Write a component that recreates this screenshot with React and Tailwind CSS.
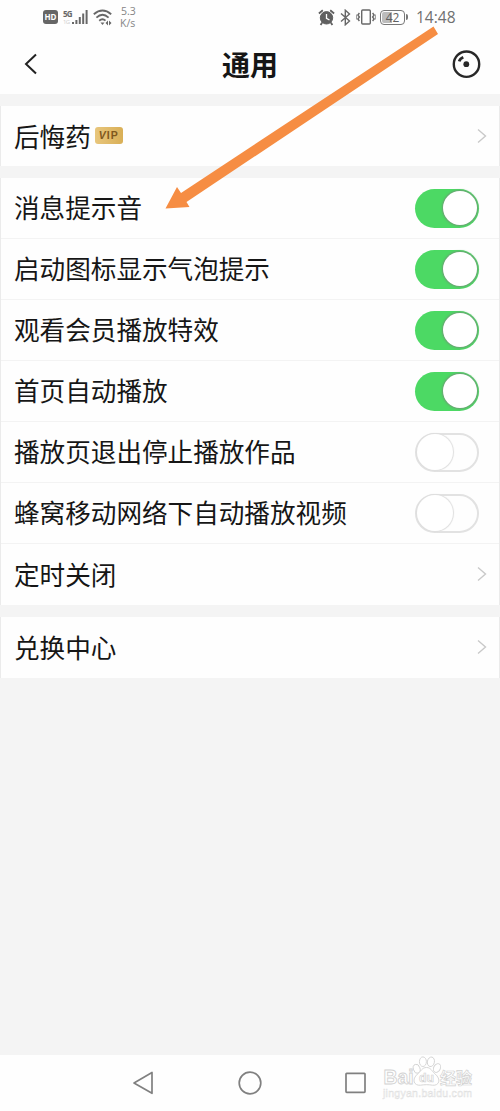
import React, { useState } from "react";

const switchRows = [
    { id: "sound", label: "消息提示音", on: true },
    { id: "bubble", label: "启动图标显示气泡提示", on: true },
    { id: "effect", label: "观看会员播放特效", on: true },
    { id: "home", label: "首页自动播放", on: true },
    { id: "exit", label: "播放页退出停止播放作品", on: false },
    { id: "cellular", label: "蜂窝移动网络下自动播放视频", on: false },
];

const Chevron = () => (
    <svg className="w-[10px] h-[16px] mr-[12px] -mt-px" viewBox="0 0 10 16" fill="none" stroke="#c9c9c9" strokeWidth="1.4">
        <path d="M1 1.5L8.5 8L1 14.5" />
    </svg>
);

const Toggle = ({ on, onClick, label }) => (
    <button
        role="switch"
        aria-checked={on}
        aria-label={label}
        onClick={onClick}
        className={`w-16 h-[39px] mr-[20px] rounded-full flex items-center ${on ? "bg-[#4cd964] justify-end pr-[2px]" : "bg-[#fefefe] border-2 border-[#e2e2e2]"}`}
    >
        <span
            className={`rounded-full bg-white ${on ? "w-[34px] h-[34px] shadow-[0_0_2px_1px_#6c9f74]" : "w-[36px] h-[36px] shadow-[0_0_1px_1px_#dedede]"}`}
        ></span>
    </button>
);

const Row = ({ label, badge, children }) => (
    <div className="h-[61px] pl-[13px] flex items-center justify-between">
        <div className="flex items-center">
            <span className="pt-[2px] text-[25.6px] leading-[36px] whitespace-nowrap">{label}</span>
            {badge}
        </div>
        {children}
    </div>
);

const StatusBar = () => (
    <div className="h-[34px] px-[43px] flex items-center justify-between text-[#686868]">
        <div className="flex items-center">
            <span className="w-[15px] h-[14px] rounded-[3px] bg-[#666] text-white text-[8px] font-bold leading-[14px] text-center">HD</span>
            <div className="w-[9px] ml-[5px] h-[17px] text-[8px] leading-[9px] font-bold tracking-[-0.8px]">
                5G
                <div className="text-[6px] leading-[8px] font-normal text-[#cfcfcf]">1G</div>
            </div>
            <svg className="w-4 h-[16px]" viewBox="0 0 16 16" fill="#686868">
                <path d="M0 13h2v2H0zM3.4 11h2v4h-2zM6.8 8h2v7h-2zM10.2 4.5h2V15h-2zM13.6 1h2v14h-2z" />
            </svg>
            <svg className="w-5 h-[17px] ml-[5px]" viewBox="0 0 20 17" fill="none" stroke="#686868" strokeWidth="1.8">
                <path d="M.8 5.2Q9.5-2.2 18.2 5.2M3.4 8.6Q9.5 3 15.6 8.6M6.2 11.7Q9.5 8.8 12.5 11.7" />
                <path d="M7.5 13.5h4L9.5 16z" fill="#686868" stroke="none" />
                <path d="M15 11.5L12.5 14l2.5 2.5zM16 11.5l2.5 2.5-2.5 2.5z" fill="#686868" stroke="none" />
            </svg>
            <div className="ml-[7px] text-[10.5px] leading-[12px] text-[#858585]">
                <div className="pl-px">5.3</div>
                <div>K/s</div>
            </div>
        </div>
        <div className="flex items-center">
            <svg className="w-[17px] h-[17px] mr-[5px]" viewBox="0 0 17 17" fill="none" stroke="#606060">
                <circle cx="8.5" cy="8.8" r="6.2" fill="#606060" />
                <path d="M.9 4.5L4.8 1.2M16.1 4.5l-3.9-3.3M4.2 13.5L2.6 16M12.8 13.5l1.6 2.5" strokeWidth="1.8" />
                <path d="M8.5 5v4.3l3 1.7" stroke="#fff" strokeWidth="1.3" />
            </svg>
            <svg className="w-[11px] h-[17px] mr-[5px]" viewBox="0 0 11 17" fill="none" stroke="#686868" strokeWidth="1.4">
                <path d="M1 4.5l8.5 7.6-4.2 3.7V1.2l4.2 3.7L1 12.5" />
            </svg>
            <svg className="w-[20px] h-[16px] mr-[4px]" viewBox="0 0 20 16" fill="none" stroke="#686868" strokeWidth="1.4">
                <rect x="5.7" y="1" width="8.6" height="14" rx="1" />
                <path d="M3.4 4l-1.5 2 1.5 2-1.5 2 1.5 2M16.6 4l1.5 2-1.5 2 1.5 2-1.5 2" />
                <path d="M.6 5.5v5M19.4 5.5v5" strokeWidth=".7" />
            </svg>
            <div className="flex items-center">
                <div className="relative w-[25px] h-[15px] border border-[#777] rounded-[4px] p-px">
                    <div className="w-[10px] h-full bg-[#bcbcbc] rounded-l-[2px]"></div>
                    <span className="absolute inset-0 text-center text-[12px] leading-[13px] text-[#606060]">42</span>
                </div>
                <div className="w-[2px] h-[6px] ml-px bg-[#777] rounded-r"></div>
            </div>
            <span className="ml-[8px] w-[41px] text-[15.5px] leading-[20px] whitespace-nowrap text-[#707070]">14:48</span>
        </div>
    </div>
);

const Header = () => (
    <div className="h-[60px] pl-[24px] pr-[19px] flex items-center justify-between">
        <svg className="w-[28px] h-[22px]" viewBox="0 0 28 22" fill="none" stroke="#222" strokeWidth="2">
            <path d="M12 1.5L2 11l10 9.5" />
        </svg>
        <h1 className="pt-[2px] -ml-[4px] text-[28px] leading-[40px] font-bold">通用</h1>
        <svg className="w-[29px] h-[29px]" viewBox="0 0 29 29" fill="none" stroke="#282828" strokeWidth="2.4">
            <circle cx="14.5" cy="14.2" r="12.7" />
            <circle cx="14.3" cy="14.2" r="2.9" fill="#282828" stroke="none" />
            <path d="M7.2 11.3Q8 8.6 11.3 7.2" strokeWidth="2.8" />
        </svg>
    </div>
);

const VipBadge = () => (
    <span className="w-[28px] h-[17px] ml-[4px] -mt-[2px] rounded-[3px] bg-linear-to-r from-[#e8c67c] to-[#d9af56] text-[#80571c] text-[10.5px] leading-[17px] font-bold text-center tracking-[1px]">
        <i>V</i>IP
    </span>
);

const Watermark = () => (
    <div className="absolute left-[382px] top-[1056px] w-[94px] h-[46px]">
        <svg className="w-full h-full" viewBox="0 0 94 46" fill="#fff" stroke="#d2d2d2" strokeWidth=".9">
            <text className="font-['Liberation_Sans',sans-serif]" x="1.5" y="28" fontSize="20" fontWeight="bold" textLength="30" lengthAdjust="spacingAndGlyphs">Bai</text>
            <ellipse cx="34.7" cy="12.8" rx="3.3" ry="4.6" transform="rotate(-18 34.7 12.8)" />
            <ellipse cx="40.9" cy="5.7" rx="3.5" ry="4.8" />
            <ellipse cx="48.9" cy="5.8" rx="3.5" ry="4.8" transform="rotate(12 48.9 5.8)" />
            <ellipse cx="55" cy="12" rx="3.3" ry="4.6" transform="rotate(26 55 12)" />
            <path d="M44.5 11.5c4.5 0 5.3 3.8 8.3 6.2 7 5.7 4.2 12.3-2.3 11.5-4.5-.7-7.5-.7-12 0-6.5.8-9.3-5.8-2.8-11.3 3.5-2.8 4.3-6.4 8.8-6.4z" />
            <text className="font-['Liberation_Sans',sans-serif]" x="37" y="26" fontSize="13" fontWeight="bold" textLength="15" lengthAdjust="spacingAndGlyphs" strokeWidth=".7">du</text>
            <text className="font-['Noto_Sans_CJK_SC',sans-serif]" x="58" y="27.5" fontSize="16" fontWeight="bold" strokeWidth=".7">经验</text>
            <text className="font-['Liberation_Sans',sans-serif]" x="1" y="40.5" fontSize="10.5" strokeWidth=".5" stroke="#dedede" textLength="89">jingyan.baidu.com</text>
        </svg>
    </div>
);

const NavBar = () => (
    <div className="h-[56px] px-[132px] bg-[#fefefe] flex items-center justify-between">
        <svg className="w-[23px] h-[24px]" viewBox="0 0 23 24" fill="none" stroke="#808080" strokeWidth="1.7" strokeLinejoin="round">
            <path d="M20 1.5v20.8L2 12z" />
        </svg>
        <svg className="w-6 h-6" viewBox="0 0 24 24" fill="none" stroke="#808080" strokeWidth="1.7">
            <circle cx="12" cy="12" r="10.8" />
        </svg>
        <svg className="w-[23px] h-[22px]" viewBox="0 0 23 22" fill="none" stroke="#808080" strokeWidth="1.7">
            <rect x="1" y="1.3" width="19" height="19" rx=".7" />
        </svg>
    </div>
);

const App = () => {
    const [rows, setRows] = useState(switchRows);

    const toggleRow = (id) => {
        setRows(rows.map((row) => (row.id === id ? { ...row, on: !row.on } : row)));
    };

    return (
        <div className="relative w-[500px] h-[1111px] overflow-hidden flex flex-col bg-[#f4f4f4] text-[#161616] font-['Liberation_Sans','Noto_Sans_CJK_SC',sans-serif]">
            <div className="bg-[#fefefe] font-['Open_Sans','Noto_Sans_CJK_SC',sans-serif]">
                <StatusBar />
                <Header />
            </div>

            <div className="flex-1 pt-3 flex flex-col gap-3">
                <div className="h-[60px] overflow-hidden bg-[#fefefe] border-x border-[#ebebeb]">
                    <Row label="后悔药" badge={<VipBadge />}>
                        <Chevron />
                    </Row>
                </div>

                <div className="bg-[#fefefe] border-x border-[#ebebeb] divide-y divide-[#f3f3f3]">
                    {rows.map((row) => (
                        <Row key={row.id} label={row.label}>
                            <Toggle on={row.on} label={row.label} onClick={() => toggleRow(row.id)} />
                        </Row>
                    ))}
                    <Row label="定时关闭">
                        <Chevron />
                    </Row>
                </div>

                <div className="bg-[#fefefe] border-x border-[#ebebeb]">
                    <Row label="兑换中心">
                        <Chevron />
                    </Row>
                </div>
            </div>

            <NavBar />
            <Watermark />

            {/* Pointer to the first switch */}
            <svg className="absolute left-[160px] top-[20px] w-[285px] h-[195px] pointer-events-none" viewBox="160 20 285 195">
                <path d="M433.5 26.5L181 193L177 187L165.5 208.5L189.5 207L186.5 202L438 34Z" fill="#f68d43" />
            </svg>
        </div>
    );
};

export default App;
